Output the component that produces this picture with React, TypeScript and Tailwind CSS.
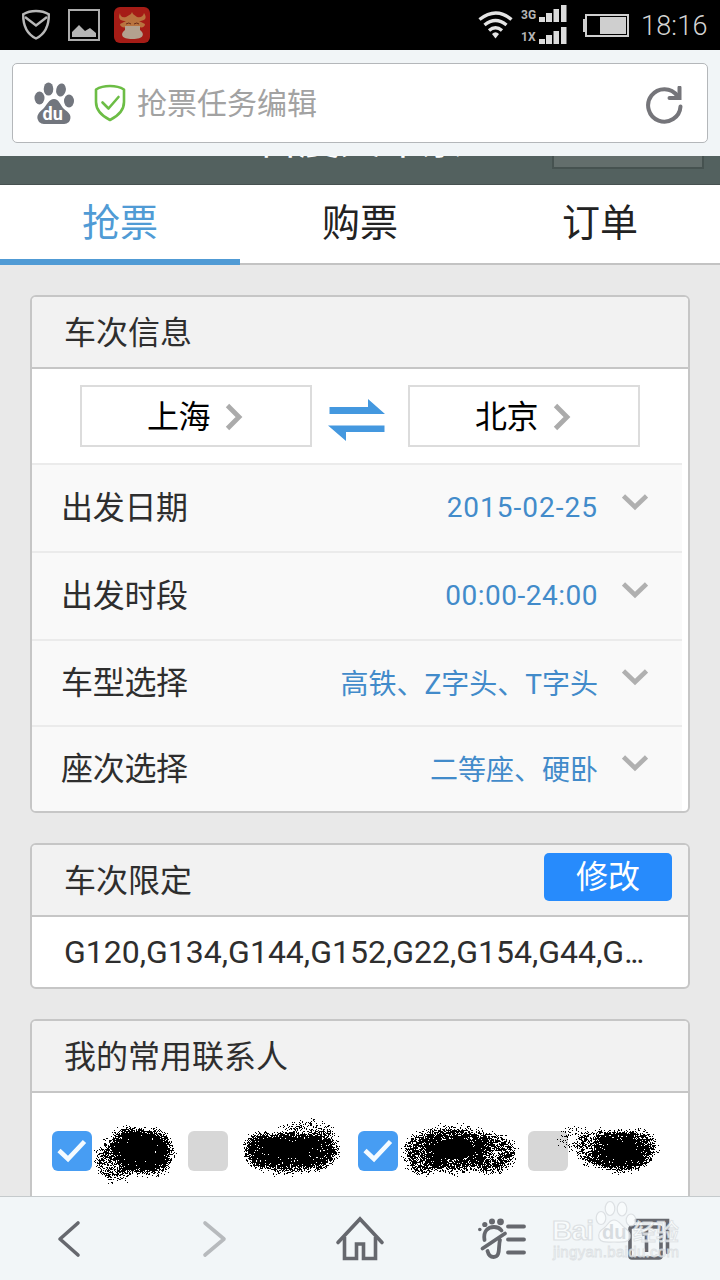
import { useState } from "react";
import type { ReactNode } from "react";

interface Blob {
  cx: number;
  cy: number;
  rx: number;
  ry: number;
  count: number;
}

interface Contact {
  id: number;
  checked: boolean;
  className: string;
  width: number;
  blobs: Blob[];
}

const tabs = ["抢票", "购票", "订单"];

const options = [
  { label: "出发日期", value: "2015-02-25", className: "h-[88px]", valueClass: "tracking-[1px]" },
  { label: "出发时段", value: "00:00-24:00", className: "h-[88px]", valueClass: "tracking-[0.5px]" },
  { label: "车型选择", value: "高铁、Z字头、T字头", className: "h-[86px]", valueClass: "pt-1" },
  { label: "座次选择", value: "二等座、硬卧", className: "h-[86px]", valueClass: "pt-1" },
];

const initialContacts: Contact[] = [
  {
    id: 1,
    checked: true,
    className: "w-[136px]",
    width: 96,
    blobs: [
      { cx: 47, cy: 40, rx: 30, ry: 22, count: 4200 },
      { cx: 35, cy: 30, rx: 18, ry: 15, count: 500 },
      { cx: 62, cy: 41, rx: 19, ry: 22, count: 1300 },
      { cx: 23, cy: 49, rx: 20, ry: 22, count: 800 },
    ],
  },
  {
    id: 2,
    checked: false,
    className: "w-[170px]",
    width: 130,
    blobs: [
      { cx: 62, cy: 39, rx: 38, ry: 18, count: 3600 },
      { cx: 34, cy: 39, rx: 19, ry: 18, count: 1500 },
      { cx: 88, cy: 39, rx: 22, ry: 19, count: 1700 },
      { cx: 60, cy: 46, rx: 36, ry: 17, count: 1000 },
      { cx: 80, cy: 23, rx: 28, ry: 15, count: 340 },
    ],
  },
  {
    id: 3,
    checked: true,
    className: "w-[170px]",
    width: 130,
    blobs: [
      { cx: 56, cy: 38, rx: 40, ry: 23, count: 3100 },
      { cx: 26, cy: 42, rx: 20, ry: 22, count: 1200 },
      { cx: 92, cy: 42, rx: 25, ry: 20, count: 1400 },
    ],
  },
  {
    id: 4,
    checked: false,
    className: "w-[140px]",
    width: 100,
    blobs: [
      { cx: 52, cy: 40, rx: 30, ry: 20, count: 3400 },
      { cx: 30, cy: 37, rx: 26, ry: 19, count: 750 },
      { cx: 68, cy: 36, rx: 21, ry: 19, count: 700 },
      { cx: 6, cy: 28, rx: 18, ry: 13, count: 110 },
    ],
  },
];

// seeded so the spray looks the same on every render
function sprayPath(id: number, blobs: Blob[]) {
  let seed = id * 7919;
  const rand = () => {
    seed = (seed * 1664525 + 1013904223) % 4294967296;
    return seed / 4294967296;
  };
  let d = "";
  for (const { cx, cy, rx, ry, count } of blobs) {
    for (let i = 0; i < count; i++) {
      const angle = rand() * Math.PI * 2;
      const r = Math.pow((rand() + rand() + rand()) / 2.4, 0.85);
      const x = Math.round(cx + Math.cos(angle) * rx * r);
      const y = Math.round(cy + Math.sin(angle) * ry * r);
      d += `M${x} ${y}h1v1h-1z`;
    }
  }
  return d;
}

function Spray({ contact }: { contact: Contact }) {
  const core = contact.blobs[0];
  return (
    <svg
      width={contact.width}
      height={80}
      viewBox={`0 0 ${contact.width} 80`}
      className="pointer-events-none shrink-0 overflow-visible"
      shapeRendering="crispEdges"
    >
      <ellipse cx={core.cx} cy={core.cy} rx={core.rx * 0.5} ry={core.ry * 0.45} />
      <path d={sprayPath(contact.id, contact.blobs)} />
    </svg>
  );
}

function Signal({ label }: { label: string }) {
  return (
    <div className="flex h-[22px] items-end">
      <span className="w-[18px] text-[12px] leading-[13px] font-bold text-[#b5b5b5]">{label}</span>
      <svg width="28" height="17" viewBox="0 0 28 17" fill="#dcdcdc">
        <path d="M0 12h6v5H0zM7 8h6v9H7zM14.500 4h5.500v13h-5.500zM22 0h5.500v17H22z" />
      </svg>
    </div>
  );
}

function StatusBar() {
  return (
    <div className="flex h-[50px] shrink-0 items-center bg-black pr-3 pl-[21px]">
      <svg width="30" height="34" viewBox="0 0 30 34" fill="none" stroke="#b8b8b8" strokeWidth="2.4">
        <path d="M15 3C11 3 6 4 2.200 6.200C2 17 6 26 15 30.500C24 26 28 17 27.800 6.200C24 4 19 3 15 3Z" />
        <path d="M4 9l11 8.500L26 9" />
      </svg>
      <svg className="ml-[17px]" width="32" height="32" viewBox="0 0 32 32" fill="none">
        <rect x="1" y="1" width="30" height="30" stroke="#adadad" strokeWidth="2" />
        <path d="M4 28v-5l7-7 6 6 5-3 6 5v4z" fill="#b5b5b5" />
      </svg>
      <svg className="ml-3.5" width="36" height="36" viewBox="0 0 36 36">
        <rect width="36" height="36" rx="6" fill="#a51c16" />
        <path
          d="M6 6C3 13 8 14 12 14L6 17c0 3 4 4 6 3v7h13v-7c3 1 6 0 6-3l-6-3c5 0 9-2 5-8-1 4-4 5-7 4l-4-3-1-2-1 2-5 3c-4 1-6-1-6-4z"
          fill="#b9733f"
        />
        <path d="M12 17q3-2 5 0M20 17q3-2 5 0" stroke="#672a18" fill="none" />
        <path d="M11 19h15v4c5 4 4 9-7.500 9S6 27 11 23z" fill="#b3a18f" />
      </svg>
      <svg className="ml-auto" width="36" height="28" viewBox="0 0 36 28" fill="none" stroke="#e4e4e4" strokeWidth="3.400">
        <path d="M1.500 8.500Q18-4.500 33.500 8.500M6.500 14Q17.500 5 28.500 14M11 19.500Q17.500 14 24 19.500" />
        <path d="M14 23q3.500-3.500 7 0l-3.500 4.500z" fill="#e4e4e4" stroke="none" />
      </svg>
      <div className="mt-[-6px] mr-4 ml-[7px]">
        <Signal label="3G" />
        <Signal label="1X" />
      </div>
      <svg width="46" height="24" viewBox="0 0 46 24" fill="none">
        <rect x="3" y="2" width="42" height="21" stroke="#cfcfcf" strokeWidth="2" />
        <path d="M0 6h3v13H0zM17 4h26v17H17z" fill="#cfcfcf" />
      </svg>
      <span className="ml-3 w-[67px] pt-0.5 text-[27px] leading-none font-light tracking-[0.2px] whitespace-nowrap text-[#d4d4d4]">
        18:16
      </span>
    </div>
  );
}

function AddressBar() {
  return (
    <div className="relative z-10 h-[106px] shrink-0 bg-[#f1f5f7] px-3 pt-[13px]">
      <div className="flex h-20 items-center rounded-[5px] border border-[#b4b7ba] bg-white pr-6 pl-[21px]">
        <svg width="40" height="43" viewBox="0 0 40 43" fill="#72767e">
          <ellipse cx="5.500" cy="16" rx="5" ry="6.500" />
          <ellipse cx="14.500" cy="7" rx="4.800" ry="6.600" />
          <ellipse cx="27" cy="8" rx="4.800" ry="6.600" transform="rotate(12 27 8)" />
          <ellipse cx="35" cy="19" rx="5" ry="6.500" />
          <path d="M20 17c-5 0-7 6-11 10-4 3-7 7-5 11 2 5 7 4 16 4s14 1 16-4c2-5-2-8-6-11-4-4-5-10-10-10z" />
          <text x="8.500" y="38" fontSize="18" fontWeight="700" fontFamily="Roboto, sans-serif" fill="#fff">
            du
          </text>
        </svg>
        <svg className="ml-5" width="32" height="38" viewBox="0 0 32 38" fill="none" stroke="#6cbd45" strokeLinejoin="round" strokeLinecap="round">
          <path d="M16 2C11 2 6 3 2 5.500V18c0 8 6 14 14 18 8-4 14-10 14-18V5.500C26 3 21 2 16 2Z" strokeWidth="2.600" />
          <path d="M8.500 18.500l6 6L24.500 13" strokeWidth="2.600" />
        </svg>
        <span className="ml-[11px] pt-0.5 text-[30px] leading-none text-[#a2a2a2]">抢票任务编辑</span>
        <svg className="mt-1 ml-auto" width="38" height="38" viewBox="0 0 38 38" fill="none" stroke="#75757a" strokeWidth="4" strokeLinecap="round">
          <path d="M35.500 20.500A16.200 16.200 0 1 1 32.500 10" />
          <path d="M34.500 1.500v10.500H24.500" />
        </svg>
      </div>
    </div>
  );
}

function Chevron({ className }: { className: string }) {
  return (
    <svg className={className} width="26" height="17" viewBox="0 0 26 17" fill="none" stroke="#b0b0b0" strokeWidth="4.600">
      <path d="M1.500 2L13 13L24.500 2" />
    </svg>
  );
}

function CityButton({ name }: { name: string }) {
  return (
    <button className="flex h-[62px] w-[232px] items-center border-2 border-[#dcdcdc] bg-white pt-0.5 pl-[65px] text-black">
      <span className="text-[32px] leading-none tracking-[-0.4px]">{name}</span>
      <svg className="ml-[15px]" width="18" height="28" viewBox="0 0 18 28" fill="none" stroke="#ababab" strokeWidth="4.800">
        <path d="M2.500 2.500L14 14L2.500 25.500" />
      </svg>
    </button>
  );
}

function Card({ title, action, className, children }: { title: string; action?: ReactNode; className: string; children: ReactNode }) {
  return (
    <section className={`overflow-hidden rounded-md border-2 border-[#c6c6c6] bg-white ${className}`}>
      <header className="flex h-[72px] items-center justify-between border-b-2 border-[#c6c6c6] bg-[#f2f2f2] pr-4 pl-8">
        <h2 className="pt-0.5 text-[32px] leading-none text-[#2e2e2e]">{title}</h2>
        {action}
      </header>
      {children}
    </section>
  );
}

function Checkbox({ checked, onClick }: { checked: boolean; onClick: () => void }) {
  return (
    <button
      onClick={onClick}
      className={`flex size-10 shrink-0 items-center justify-center rounded-md ${checked ? "bg-[#479df3]" : "bg-[#d7d7d7]"}`}
    >
      {checked && (
        <svg width="30" height="24" viewBox="0 0 30 24" fill="none" stroke="#f5fbff" strokeWidth="4.600">
          <path d="M2 11.500l9 8.500L27.500 2.500" />
        </svg>
      )}
    </button>
  );
}

function Watermark() {
  return (
    <svg
      className="pointer-events-none absolute top-0 right-9"
      width="136"
      height="70"
      viewBox="0 0 136 70"
      fill="#fafcfd"
      stroke="#d9dde0"
      strokeWidth="1.200"
      opacity="0.85"
    >
      <ellipse cx="53" cy="21" rx="4.800" ry="6.500" />
      <ellipse cx="62" cy="11.500" rx="4.800" ry="7" />
      <ellipse cx="74" cy="12" rx="4.800" ry="7" />
      <ellipse cx="83" cy="23" rx="4.800" ry="6" />
      <path d="M66 23c-5 0-6 5-10 8-5 3-6 6-5 10 2 5 7 4 15 4s14 1 16-4c1-4-1-7-5-10-4-3-6-8-11-8z" />
      <g fontFamily="'Liberation Sans', sans-serif" fontWeight="700">
        <text x="4" y="43" fontSize="28" textLength="42">Bai</text>
        <text x="54" y="42" fontSize="20" fill="#d3d8dc" stroke="none">du</text>
        <text x="85" y="43" fontSize="23" fontWeight="500" fontFamily="'Noto Sans CJK SC', sans-serif" strokeWidth="0.800">经验</text>
        <text x="5" y="60" fontSize="15" fontWeight="400" textLength="126" strokeWidth="0.800">jingyan.baidu.com</text>
      </g>
    </svg>
  );
}

function BottomNav() {
  return (
    <nav className="relative flex h-[84px] shrink-0 items-center border-t border-[#c5cacc] bg-[#f2f6f8] pl-[57px] text-[#66686e]">
      <svg width="24" height="38" viewBox="0 0 24 38" fill="none" stroke="currentColor" strokeWidth="3.600" strokeLinecap="round" strokeLinejoin="round">
        <path d="M21 3L3 19L21 35" />
      </svg>
      <svg className="ml-[121px]" width="26" height="38" viewBox="0 0 26 38" fill="none" stroke="#b7babd" strokeWidth="3.600" strokeLinecap="round" strokeLinejoin="round">
        <path d="M3 3L22 19L3 35" />
      </svg>
      <svg className="ml-[107px]" width="50" height="46" viewBox="0 0 50 46" fill="none" stroke="currentColor" strokeWidth="3.600" strokeLinecap="round">
        <path d="M3 26.500L25 3L47 26.500" />
        <path d="M9.500 21v21.500h12V28h7v14.500h12V21" strokeLinecap="butt" />
      </svg>
      <svg className="ml-[93px]" width="50" height="44" viewBox="0 0 50 44" fill="none" stroke="currentColor" strokeWidth="3.800" strokeLinecap="round">
        <path d="M30 9.500h16M30 22.500h16M30 35.500h16" />
        <path d="M6.500 23C5 14 10 10 16 10q5 0 7.500 3.500M4.500 31.500L27 16.500M22 23C20 29 23 40 15.500 40Q11 40 9.500 34" />
        <g fill="currentColor" stroke="none">
          <circle cx="1.800" cy="12.500" r="1.800" />
          <circle cx="6.800" cy="7.500" r="2.600" />
          <circle cx="14" cy="4.500" r="3" />
          <circle cx="22.500" cy="4.800" r="3.400" />
        </g>
      </svg>
      <svg className="ml-[100px]" width="42" height="42" viewBox="0 0 42 42" fill="none" stroke="currentColor" strokeWidth="3.600">
        <rect x="2" y="9" width="31" height="31" rx="2" />
        <path d="M7.500 2.500h32v32" strokeLinecap="round" />
        <path d="M14 16.500l4.500-2V34" />
      </svg>
      <Watermark />
    </nav>
  );
}

export default function App() {
  const [activeTab, setActiveTab] = useState(0);
  const [contacts, setContacts] = useState(initialContacts);

  const toggleContact = (id: number) => {
    setContacts(contacts.map((c) => (c.id === id ? { ...c, checked: !c.checked } : c)));
  };

  return (
    <div className="flex h-[1280px] w-[720px] flex-col overflow-hidden bg-[#e9e9e9] font-[Roboto,'Noto_Sans_CJK_SC',sans-serif]">
      <StatusBar />
      <AddressBar />

      {/* Page title, scrolled under the address bar */}
      <div className="relative h-[29px] shrink-0 border-b border-[#465150] bg-[#53615f]">
        <h1 className="absolute top-[-38px] w-full text-center text-[41px] leading-[44px] text-white">百度火车票</h1>
        <div className="absolute top-[-40px] right-4 h-[53px] w-[152px] border-2 border-[#465250] bg-[#636e6c]" />
      </div>

      {/* Tabs */}
      <div className="flex h-20 shrink-0 bg-white">
        {tabs.map((tab, i) => (
          <button
            key={tab}
            onClick={() => setActiveTab(i)}
            className={`flex-1 text-[38px] leading-none ${
              activeTab === i
                ? "border-b-[6px] border-[#509bd5] pt-0.5 text-[#509bd5]"
                : "border-b-2 border-[#c3c3c3] pb-0.5 text-[#222]"
            }`}
          >
            {tab}
          </button>
        ))}
      </div>

      <main className="min-h-0 flex-1 overflow-hidden px-[30px] pt-[30px]">
        <Card title="车次信息" className="h-[518px]">
          <div className="flex h-[94px] items-center px-12">
            <CityButton name="上海" />
            <svg className="mt-2 ml-4" width="58" height="44" viewBox="0 0 58 44" fill="#4498df">
              <path d="M1.500 9h38.500V1l17 15H1.500zM56.500 34H18v9L0 27.500h56.500z" />
            </svg>
            <div className="ml-auto">
              <CityButton name="北京" />
            </div>
          </div>
          <div className="mr-1.5">
            {options.map((option) => (
              <div key={option.label} className={`flex items-center border-t-2 border-[#ebebeb] bg-[#f9f9f9] pr-[34px] pl-[29px] ${option.className}`}>
                <span className="text-[32px] leading-none tracking-[-0.3px] text-[#2e2e2e]">{option.label}</span>
                <span className={`ml-auto text-[28px] leading-none text-[#428bca] ${option.valueClass}`}>{option.value}</span>
                <Chevron className="mb-3 ml-6" />
              </div>
            ))}
          </div>
        </Card>

        <Card
          title="车次限定"
          className="mt-[30px] h-[146px]"
          action={
            <button className="mb-1.5 h-12 w-32 rounded-[5px] bg-[#278bfc] text-[32px] leading-none text-white">修改</button>
          }
        >
          <p className="flex h-[70px] items-center pl-8 text-[32px] text-[#2e2e2e]">
            G120,G134,G144,G152,G22,G154,G44,G<span className="tracking-[-2.4px]">...</span>
          </p>
        </Card>

        <Card title="我的常用联系人" className="mt-[30px] h-[240px]">
          <div className="flex h-[116px] items-center pl-5">
            {contacts.map((contact) => (
              <div key={contact.id} className={`flex items-center ${contact.className}`}>
                <Checkbox checked={contact.checked} onClick={() => toggleContact(contact.id)} />
                <Spray contact={contact} />
              </div>
            ))}
          </div>
        </Card>
      </main>

      <BottomNav />
    </div>
  );
}
